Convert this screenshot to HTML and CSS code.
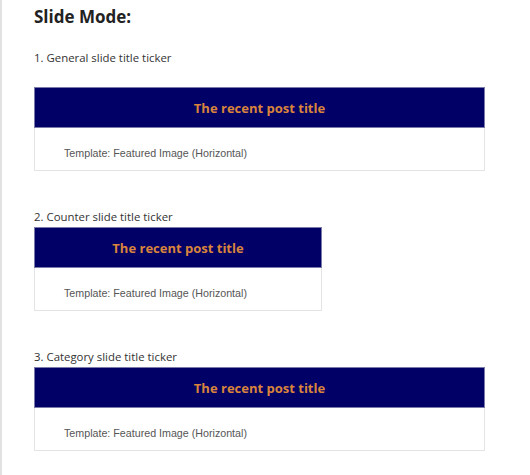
FILE: index.html
```html
<!DOCTYPE html>
<html lang="en">
<head>
  <meta charset="UTF-8">
  <title>Slide Mode</title>
  <link rel="stylesheet" href="styles.css">
</head>
<body>
  <div class="page">
    <h2>Slide Mode:</h2>

    <p class="label first">1. General slide title ticker</p>
    <div class="ticker">
      <div class="ticker-title">The recent post title</div>
      <div class="ticker-body">Template: Featured Image (Horizontal)</div>
    </div>

    <p class="label">2. Counter slide title ticker</p>
    <div class="ticker narrow">
      <div class="ticker-title">The recent post title</div>
      <div class="ticker-body">Template: Featured Image (Horizontal)</div>
    </div>

    <p class="label">3. Category slide title ticker</p>
    <div class="ticker">
      <div class="ticker-title">The recent post title</div>
      <div class="ticker-body">Template: Featured Image (Horizontal)</div>
    </div>
  </div>
</body>
</html>
```

FILE: styles.css
```css
body {
  margin: 0;
  background: #fff;
  font-family: "Open Sans", sans-serif;
  color: #333;
}

.page {
  border-left: 2px solid #e2e2e2;
  min-height: 475px;
  padding: 0 45px 0 32px;
  box-sizing: border-box;
}

h2 {
  margin: 0;
  padding-top: 5px;
  font-size: 17px;
  font-weight: 700;
  color: #222;
  line-height: 24px;
}

.label {
  margin: 38px 0 2px;
  font-size: 11.4px;
  line-height: 16px;
  color: #333;
}
.label.first {
  margin-top: 21px;
  margin-bottom: 21px;
}

.ticker {
  border: 1px solid #e4e4e4;
  width: 451px;
  box-sizing: border-box;
}
.ticker.narrow {
  width: 288px;
}

.ticker-title {
  background: #000066;
  border: 1px solid #7a7aa8;
  margin: -1px -1px 0;
  height: 41px;
  box-sizing: border-box;
  display: flex;
  align-items: center;
  justify-content: center;
  color: #d9843c;
  font-size: 13px;
  font-weight: 700;
}

.ticker-body {
  padding: 18px 29px 10px;
  font-family: "Liberation Sans", Arial, sans-serif;
  font-size: 10.7px;
  line-height: 14px;
  color: #555;
}
```
